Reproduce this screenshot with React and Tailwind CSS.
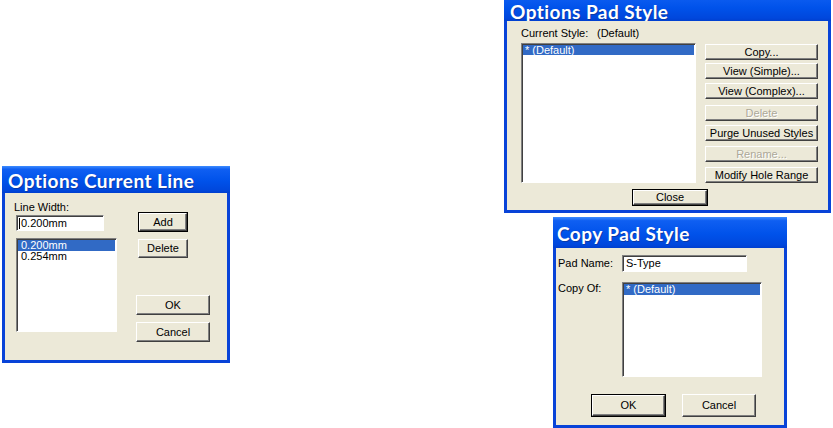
import React from "react";

const body = "font-['Liberation_Sans',Arial,sans-serif] text-[11px] leading-[13px] text-black";
const titleFont = "font-['Lato','Open_Sans',sans-serif] font-bold text-[19px] tracking-[0.45px] leading-[20px] text-white [text-shadow:1px_1px_0_#0a3aa8]";
const titleBg = "bg-[linear-gradient(180deg,#3d8cff_0%,#0f5ff2_12%,#0052ea_55%,#0047dc_90%,#003fcf_100%)]";

function Btn({ children, w, h, def, disabled, className = "" }) {
  return (
    <div
      className={`flex items-center justify-center bg-[#ECE9D8] ${def ? "border border-black" : ""} ${className}`}
      style={{ width: w, height: h }}
    >
      <div className="flex h-full w-full items-center justify-center border border-t-white border-l-white border-b-[#404040] border-r-[#404040] shadow-[inset_-1px_-1px_0_#808080]">
        <span className={disabled ? "text-[#aca899] [text-shadow:1px_1px_0_#fff]" : ""}>{children}</span>
      </div>
    </div>
  );
}

function Sunken({ w, h, children, className = "" }) {
  return (
    <div
      className={`bg-white border border-t-[#808080] border-l-[#808080] border-b-white border-r-white shadow-[inset_1px_1px_0_#404040] ${className}`}
      style={{ width: w, height: h }}
    >
      {children}
    </div>
  );
}

function Window({ left, top, w, h, titleH, title, titlePt, titlePl, children }) {
  return (
    <div className="absolute flex flex-col bg-[#0843d8]" style={{ left, top, width: w, height: h }}>
      <div className={`${titleBg} shrink-0`} style={{ height: titleH, paddingTop: titlePt, paddingLeft: titlePl }}>
        <div className={titleFont}>{title}</div>
      </div>
      <div className={`mx-[3px] mb-[3px] flex-1 bg-[#ECE9D8] ${body}`}>{children}</div>
    </div>
  );
}

export default function App() {
  return (
    <div className="relative h-[428px] w-[833px] overflow-hidden bg-white">
      {/* Options Current Line */}
      <Window left={2} top={166} w={228} h={197} titleH={27} title="Options Current Line" titlePt={5} titlePl={6}>
        <div className="flex">
          <div className="flex flex-col pl-[9px] pt-[8px]">
            <div>Line Width:</div>
            <Sunken w={88} h={16} className="ml-[2px] mt-[1px] flex items-center pl-[2px]">
              <span className="mr-[1px] h-[11px] w-[1px] bg-black" />
              <span>0.200mm</span>
            </Sunken>
            <Sunken w={101} h={94} className="ml-[2px] mt-[7px] p-[1px] leading-[11px]">
              <div className="bg-[#316AC5] pl-[3px] text-white">0.200mm</div>
              <div className="pl-[3px]">0.254mm</div>
            </Sunken>
          </div>
          <div className="ml-[19px] flex flex-col pt-[19px]">
            <Btn w={50} h={20} def className="ml-[2px]">Add</Btn>
            <Btn w={50} h={19} className="ml-[2px] mt-[7px]">Delete</Btn>
            <Btn w={74} h={20} className="mt-[37px]">OK</Btn>
            <Btn w={74} h={20} className="mt-[7px]">Cancel</Btn>
          </div>
        </div>
      </Window>

      {/* Options Pad Style */}
      <Window left={504} top={-8} w={327} h={221} titleH={29} title="Options Pad Style" titlePt={10} titlePl={6}>
        <div className="flex flex-col pl-[14px] pt-[6px]">
          <div className="flex">
            <span className="w-[76px]">Current Style:</span>
            <span>(Default)</span>
          </div>
          <div className="mt-[3px] flex">
            <Sunken w={175} h={140} className="p-[1px] leading-[10px]">
              <div className="bg-[#316AC5] pl-[2px] text-white">* (Default)</div>
            </Sunken>
            <div className="ml-[9px] mt-[1px] flex flex-col">
              <Btn w={113} h={16}>Copy...</Btn>
              <Btn w={113} h={16} className="mt-[3px]">View (Simple)...</Btn>
              <Btn w={113} h={16} className="mt-[4px]">View (Complex)...</Btn>
              <Btn w={113} h={16} className="mt-[6px]" disabled>Delete</Btn>
              <Btn w={113} h={16} className="mt-[4px]">Purge Unused Styles</Btn>
              <Btn w={113} h={16} className="mt-[5px]" disabled>Rename...</Btn>
              <Btn w={113} h={16} className="mt-[5px]">Modify Hole Range</Btn>
            </div>
          </div>
          <Btn w={76} h={17} def className="ml-[111px] mt-[6px]">Close</Btn>
        </div>
      </Window>

      {/* Copy Pad Style */}
      <Window left={553} top={217} w={234} h={211} titleH={31} title="Copy Pad Style" titlePt={7} titlePl={4}>
        <div className="flex flex-col pl-[2px] pt-[7px]">
          <div className="flex items-center">
            <span className="w-[64px]">Pad Name:</span>
            <Sunken w={125} h={17} className="flex items-center pl-[3px]">S-Type</Sunken>
          </div>
          <div className="mt-[10px] flex">
            <span className="w-[64px]">Copy Of:</span>
            <Sunken w={140} h={95} className="p-[1px] leading-[11px]">
              <div className="bg-[#316AC5] pl-[2px] text-white">* (Default)</div>
            </Sunken>
          </div>
          <div className="ml-[33px] mt-[17px] flex">
            <Btn w={75} h={23} def>OK</Btn>
            <Btn w={74} h={23} className="ml-[16px]">Cancel</Btn>
          </div>
        </div>
      </Window>
    </div>
  );
}
